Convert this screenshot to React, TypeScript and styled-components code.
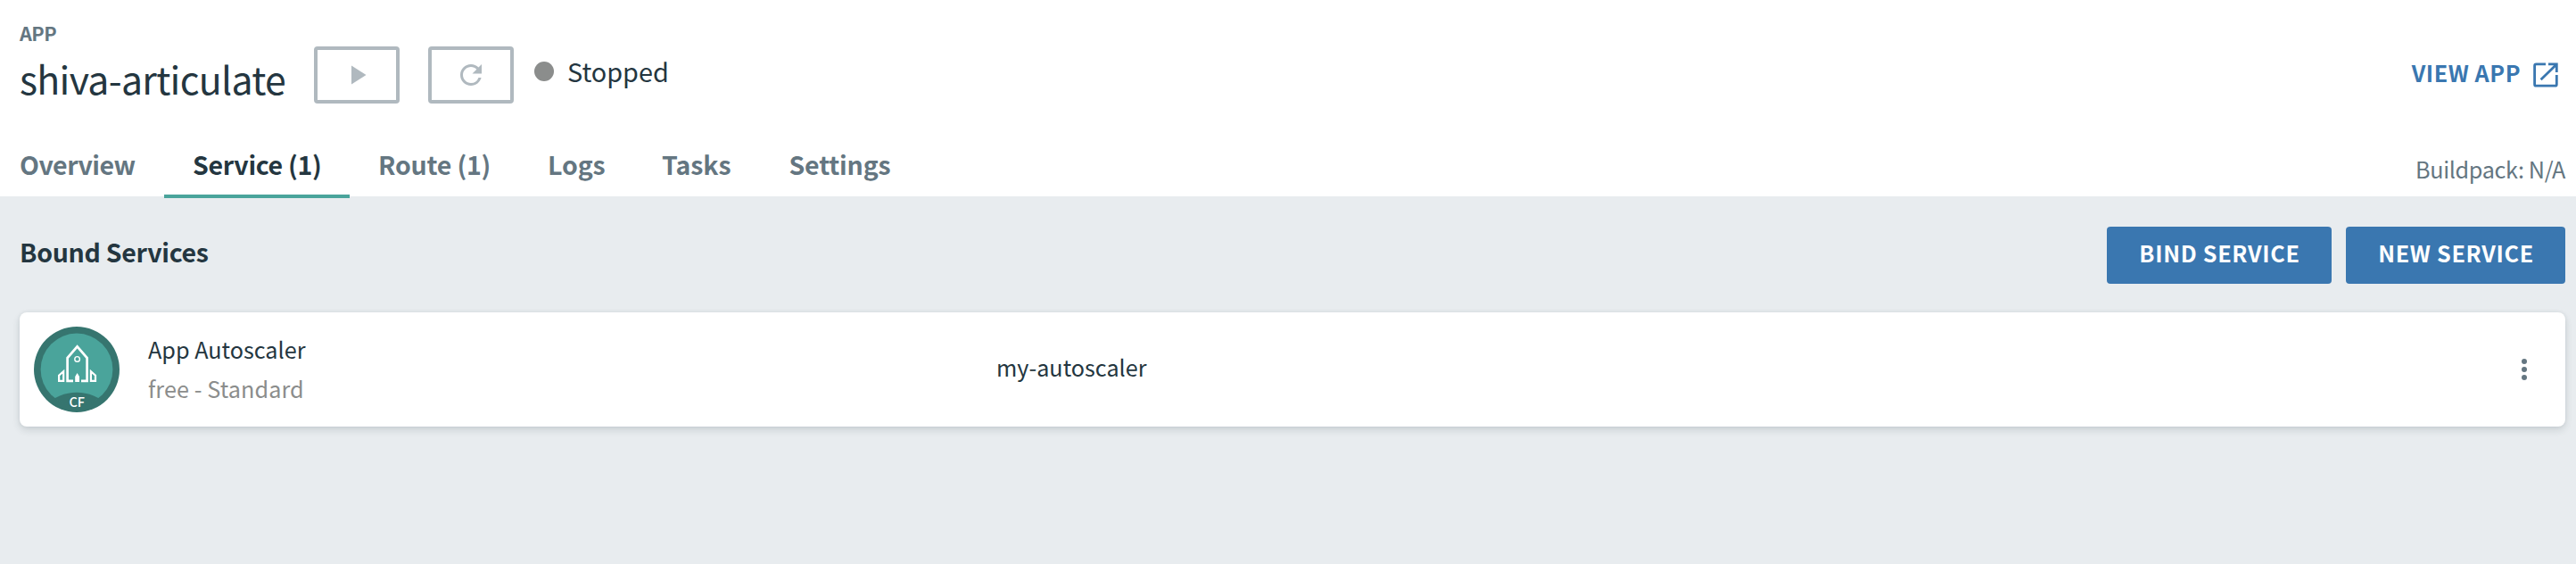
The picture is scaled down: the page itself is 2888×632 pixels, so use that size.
import React from "react";
import styled, { createGlobalStyle } from "styled-components";

const color = {
  ink: "#243640",
  muted: "#647681",
  disabled: "#b0b9bf",
  grey: "#8b8d8c",
  blue: "#3a77b0",
  teal: "#4aa49b",
  tealDark: "#36756f",
  canvas: "#e8ecef",
};

const GlobalStyle = createGlobalStyle`
  * { box-sizing: border-box; }
  body {
    margin: 0;
    background: ${color.canvas};
    color: ${color.ink};
    font-family: "Noto Sans CJK SC", "Noto Sans", sans-serif;
  }
  svg { display: block; flex: none; }
`;

const Page = styled.div`
  min-height: 632px;
  overflow: hidden;
`;

const Header = styled.header`
  height: 220px;
  padding: 20px 12px 0 22px;
  background: #fff;
`;

const Eyebrow = styled.div`
  height: 32px;
  line-height: 33px;
  font-size: 21.6px;
  font-weight: 700;
  letter-spacing: -0.5px;
  color: ${color.muted};
`;

const TitleRow = styled.div`
  display: flex;
  height: 64px;
`;

const Title = styled.h1`
  width: 330px;
  margin: 0;
  font-size: 42.8px;
  font-weight: 400;
  line-height: 70px;
  letter-spacing: -0.7px;
  white-space: nowrap;
`;

const ActionButton = styled.button`
  display: flex;
  align-items: center;
  justify-content: center;
  width: 96px;
  height: 64px;
  margin-right: 32px;
  padding: 0;
  border: 4px solid ${color.disabled};
  border-radius: 4px;
  background: #fff;
  color: ${color.disabled};

  & + & {
    margin-right: 23px;
  }
`;

const Status = styled.div`
  display: flex;
  font-size: 28.8px;
  line-height: 55px;
`;

const StatusDot = styled.span`
  width: 22px;
  height: 22px;
  margin: 17px 15px 0 0;
  border-radius: 50%;
  background: ${color.grey};
`;

const ViewLink = styled.a`
  display: flex;
  margin: 0 8px 0 auto;
  font-size: 25.2px;
  font-weight: 700;
  line-height: 58px;
  letter-spacing: 0.55px;
  color: ${color.blue};

  svg {
    margin: 18px 0 0 14px;
  }
`;

const SubHeader = styled.div`
  display: flex;
  justify-content: space-between;
  height: 72px;
  margin-top: 34px;
`;

const Tabs = styled.nav`
  display: flex;
`;

const Tab = styled.a<{ $width: number; $tracking: number; $active?: boolean }>`
  width: ${(p) => p.$width}px;
  height: 72px;
  padding-left: 32px;
  border-bottom: 4px solid ${(p) => (p.$active ? color.teal : "transparent")};
  font-size: 28.5px;
  font-weight: 700;
  line-height: 68px;
  letter-spacing: ${(p) => p.$tracking}px;
  white-space: nowrap;
  color: ${(p) => (p.$active ? color.ink : color.muted)};

  &:first-child {
    padding-left: 0;
  }
`;

const Buildpack = styled.div`
  font-size: 25.2px;
  line-height: 78px;
  letter-spacing: -0.36px;
  color: ${color.muted};
`;

const Main = styled.main`
  padding: 34px 12px 0 22px;
`;

const Toolbar = styled.div`
  display: flex;
  gap: 16px;
  height: 64px;
`;

const SectionTitle = styled.h2`
  margin: 0 auto 0 0;
  font-size: 28.5px;
  font-weight: 700;
  line-height: 55px;
  letter-spacing: -0.28px;
`;

const PrimaryButton = styled.button<{ $width: number }>`
  width: ${(p) => p.$width}px;
  height: 64px;
  padding: 0 0 6px 1px;
  border: 0;
  border-radius: 4px;
  background: ${color.blue};
  color: #fff;
  font-family: inherit;
  font-size: 25.2px;
  font-weight: 700;
  line-height: 58px;
  letter-spacing: 0.68px;
  white-space: nowrap;
`;

const ServiceCard = styled.section`
  display: flex;
  align-items: center;
  height: 128px;
  margin-top: 32px;
  padding: 0 28px 0 16px;
  border-radius: 8px;
  background: #fff;
  box-shadow: 0 4px 8px rgba(36, 54, 64, 0.14), 0 0 4px rgba(36, 54, 64, 0.08);
  font-size: 25.2px;
  line-height: 44px;
`;

const ServiceInfo = styled.div`
  width: 951px;
  margin: 0 0 2px 32px;
`;

const ServicePlan = styled.div`
  letter-spacing: 0.1px;
  color: ${color.grey};
`;

const InstanceName = styled.div`
  flex: 1;
  padding-bottom: 6px;
`;

const tabs = [
  { label: "Overview", width: 162, tracking: -0.52 },
  { label: "Service (1)", width: 208, tracking: -0.3, active: true },
  { label: "Route (1)", width: 190, tracking: -0.2 },
  { label: "Logs", width: 128, tracking: -0.1 },
  { label: "Tasks", width: 142.5, tracking: -0.1 },
  { label: "Settings", width: 180, tracking: -0.18 },
];

const PlayIcon = () => (
  <svg width="36" height="36" viewBox="0 0 24 24" fill="currentColor">
    <path d="M8 5v14l11-7z" />
  </svg>
);

const RefreshIcon = () => (
  <svg width="36" height="36" viewBox="0 0 24 24" fill="currentColor">
    <path d="M17.65 6.35A7.958 7.958 0 0 0 12 4c-4.42 0-7.99 3.58-7.99 8s3.57 8 7.99 8c3.73 0 6.84-2.55 7.73-6h-2.08A5.99 5.99 0 0 1 12 18c-3.31 0-6-2.69-6-6s2.69-6 6-6c1.66 0 3.14.69 4.22 1.78L13 11h7V4l-2.35 2.35z" />
  </svg>
);

const OpenIcon = () => (
  <svg width="28" height="28" viewBox="0 0 28 28" fill="none" stroke="currentColor" strokeWidth="2.8">
    <path d="M14 1.9H3.4Q1.6 1.9 1.6 3.7V24.4Q1.6 26.2 3.4 26.2H24.5Q26.3 26.2 26.3 24.4V14" />
    <path d="M17 1.9H26.3V11M8.6 19.3L25.8 2.4" />
  </svg>
);

const KebabIcon = () => (
  <svg width="36" height="36" viewBox="0 0 36 36" fill={color.muted}>
    <circle cx="18" cy="9" r="3" />
    <circle cx="18" cy="18" r="3" />
    <circle cx="18" cy="27" r="3" />
  </svg>
);

const ServiceBadge = () => (
  <svg width="96" height="96" viewBox="0 0 96 96">
    <defs>
      <clipPath id="face">
        <circle cx="48" cy="48" r="40.8" />
      </clipPath>
    </defs>
    <circle cx="48" cy="48" r="48" fill={color.tealDark} />
    <circle cx="48" cy="48" r="40.4" fill={color.teal} />
    <circle cx="48" cy="123" r="49.3" fill={color.tealDark} clipPath="url(#face)" />
    <g fill="none" stroke="#fff">
      <path d="M44 60.8H37.6V35L48.6 22.3L59.6 35V60.8H53" strokeWidth="2.7" />
      <circle cx="48.6" cy="36.4" r="2.8" strokeWidth="1.4" />
      <path d="M33.2 50.3V60.8H28.1V54.8ZM63.9 50.3V60.8H69V54.8Z" strokeWidth="2.2" />
    </g>
    <path d="M48.6 52L51 56V62H46.2V56Z" fill="#fff" />
    <text x="48.3" y="90.2" textAnchor="middle" fill="#fff" fontFamily='"Noto Sans CJK SC", sans-serif' fontSize="14.5" fontWeight="500">
      CF
    </text>
  </svg>
);

export default function App() {
  return (
    <Page>
      <GlobalStyle />
      <Header>
        <Eyebrow>APP</Eyebrow>
        <TitleRow>
          <Title>shiva-articulate</Title>
          <ActionButton aria-label="Start">
            <PlayIcon />
          </ActionButton>
          <ActionButton aria-label="Restart">
            <RefreshIcon />
          </ActionButton>
          <Status>
            <StatusDot />
            Stopped
          </Status>
          <ViewLink>
            VIEW APP
            <OpenIcon />
          </ViewLink>
        </TitleRow>
        <SubHeader>
          <Tabs>
            {tabs.map((t) => (
              <Tab key={t.label} $width={t.width} $tracking={t.tracking} $active={t.active}>
                {t.label}
              </Tab>
            ))}
          </Tabs>
          <Buildpack>Buildpack: N/A</Buildpack>
        </SubHeader>
      </Header>
      <Main>
        <Toolbar>
          <SectionTitle>Bound Services</SectionTitle>
          <PrimaryButton $width={252}>BIND SERVICE</PrimaryButton>
          <PrimaryButton $width={246}>NEW SERVICE</PrimaryButton>
        </Toolbar>
        <ServiceCard>
          <ServiceBadge />
          <ServiceInfo>
            <div>App Autoscaler</div>
            <ServicePlan>free - Standard</ServicePlan>
          </ServiceInfo>
          <InstanceName>my-autoscaler</InstanceName>
          <KebabIcon />
        </ServiceCard>
      </Main>
    </Page>
  );
}
